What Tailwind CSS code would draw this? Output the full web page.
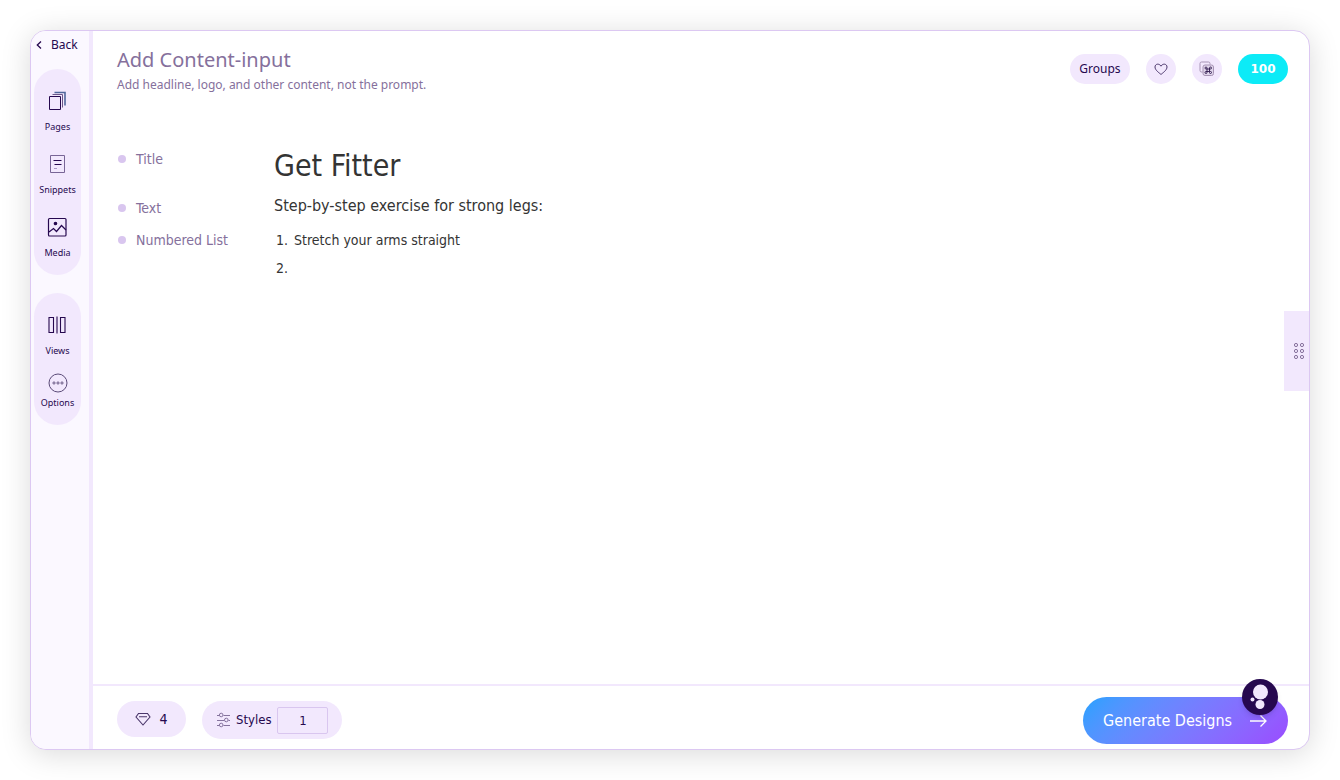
<!DOCTYPE html>
<html lang="en">
<head>
<meta charset="utf-8">
<meta name="viewport" content="width=device-width, initial-scale=1">
<title>Add Content-input</title>
<script src="https://cdn.jsdelivr.net/npm/@tailwindcss/browser@4"></script>
</head>
<body class="h-screen bg-white p-[30px] font-['DejaVu_Sans_Condensed','DejaVu_Sans',sans-serif] text-[#26084f]">
<div class="relative flex h-full overflow-hidden rounded-2xl border border-[#dcc8f2] bg-white shadow-[0_4px_30px_rgba(0,0,0,0.15)]">

  <aside class="flex w-[62px] shrink-0 flex-col border-r-4 border-[#f2e8fd] bg-[#fbf8ff]">
    <a href="#" class="flex h-[38px] items-center gap-2 pb-2.5 pl-1 font-['Noto_Sans',sans-serif] text-xs">
      <svg class="h-2.5 w-2" viewBox="0 0 8 10" fill="none" stroke="currentColor" stroke-width="1.3"><path d="M6 1.5 2.3 5 6 8.5"/></svg>Back</a>
    <nav class="ml-[3px] flex w-[47px] flex-col rounded-3xl bg-[#f2e8fd] pt-5 pb-4 font-['Noto_Sans',sans-serif] text-[9px] leading-3">
      <button class="flex h-[63px] flex-col items-center gap-2">
        <svg class="h-6 w-6 shrink-0" viewBox="0 0 24 24" fill="none" stroke="currentColor"><path d="M3.500 7.500h11v13h-11z"/><path d="M6.500 5.500h10v13" stroke="#6b5688"/><path d="M8.500 3.500h10.500v13" stroke="#50669b" stroke-width="1.600"/></svg>Pages</button>
      <button class="flex h-[63px] flex-col items-center gap-2">
        <svg class="h-6 w-6 shrink-0" viewBox="0 0 24 24" fill="none" stroke="currentColor"><path d="M4.500 3.500h14v17h-14z" stroke="#786596"/><path d="M7.500 8.500h8M8.500 12.500h7"/><path d="M8 16.500h3" stroke="#a994c5"/></svg>Snippets</button>
      <button class="flex flex-col items-center gap-2">
        <svg class="h-6 w-6 shrink-0" viewBox="0 0 24 24" fill="none" stroke="currentColor" stroke-width="1.200"><rect x="2.500" y="3.500" width="17.500" height="17.500" rx="1"/><path d="m3 17 4.500-3.500 3 3 5-6L20 15"/><circle cx="9.500" cy="8.500" r="1.200" fill="currentColor"/></svg>Media</button>
    </nav>
    <nav class="mt-[18px] ml-[3px] flex w-[47px] flex-col gap-4 rounded-3xl bg-[#f2e8fd] pt-5 pb-4 font-['Noto_Sans',sans-serif] text-[9px] leading-3">
      <button class="flex flex-col items-center gap-2">
        <svg class="h-6 w-6 shrink-0" viewBox="0 0 24 24" fill="none" stroke="currentColor" stroke-width="1.100"><path d="M3 4.500h4.500v15H3zM14.500 4.500H19v15h-4.500zM11 3.500v17"/></svg>Views</button>
      <button class="flex flex-col items-center gap-1">
        <svg class="h-5 w-5 shrink-0" viewBox="0 0 20 20" fill="none" stroke="#5b4b78"><circle cx="10" cy="10" r="9"/><g stroke-width=".9"><circle cx="6" cy="10" r="1.100"/><circle cx="10" cy="10" r="1.100"/><circle cx="14" cy="10" r="1.100"/></g></svg>Options</button>
    </nav>
  </aside>

  <div class="flex min-w-0 grow flex-col">
    <header class="flex justify-between pt-4 pr-[21px] pl-6">
      <div class="font-['Noto_Sans',sans-serif] text-[#85709c]">
        <h1 class="text-xl leading-[26px]">Add Content-input</h1>
        <p class="text-xs leading-6">Add headline, logo, and other content, not the prompt.</p>
      </div>
      <div class="mt-[7px] flex h-[30px] gap-4">
        <button class="w-[60px] rounded-full bg-[#f2e8fd] font-['Noto_Sans',sans-serif] text-xs">Groups</button>
        <button aria-label="Favorites" class="grid w-[30px] place-items-center rounded-full bg-[#f2e8fd]">
          <svg class="h-3.5 w-3.5" viewBox="0 0 14 14" fill="none" stroke="#4b376b"><path d="M7 12.500C5.200 10.800 1 8.200 1 5c0-3.200 4.200-4 6-.8C8.800 1 13 1.800 13 5c0 3.200-4.200 5.800-6 7.500Z"/></svg></button>
        <button aria-label="Shortcuts" class="grid w-[30px] place-items-center rounded-full bg-[#f2e8fd]">
          <svg class="h-4 w-4" viewBox="0 0 16 16" fill="none" stroke="#a794b5"><path d="M3.500 11H2.500A1.500 1.500 0 0 1 1 9.500v-7A1.500 1.500 0 0 1 2.500 1h7A1.500 1.500 0 0 1 11 2.500V3.500"/><rect x="4" y="4" width="10.500" height="10.500" rx="2" fill="#e0d5eb"/><path d="M8 8h2.500v2.500H8zM8 8H7a1 1 0 1 1 1-1zM10.500 8V7a1 1 0 1 1 1 1zM8 10.500v1a1 1 0 1 1-1-1zM10.500 10.500h1a1 1 0 1 1-1 1z" stroke="#2e174d" stroke-width=".9"/></svg></button>
        <button class="w-[50px] rounded-full bg-[#0cebf7] font-['DejaVu_Sans',sans-serif] text-xs font-bold text-white">100</button>
      </div>
    </header>

    <main class="grid grow grid-cols-[157px_1fr] content-start pt-[51px] pl-6 text-[#343434]">
      <div class="flex h-12 items-start gap-2.5 pt-px text-sm text-[#85709c]"><span class="mt-1.5 ml-px size-2 rounded-full bg-[#d9c6ef]"></span>Title</div>
      <h2 class="text-[30px] leading-9">Get Fitter</h2>
      <div class="flex h-8 items-start gap-2.5 pt-0.5 text-sm text-[#85709c]"><span class="mt-1.5 ml-px size-2 rounded-full bg-[#d9c6ef]"></span>Text</div>
      <p class="text-base leading-5">Step-by-step exercise for strong legs:</p>
      <div class="flex items-start gap-2.5 pt-0.5 text-sm text-[#85709c]"><span class="mt-1.5 ml-px size-2 rounded-full bg-[#d9c6ef]"></span>Numbered List</div>
      <ol class="-mt-0.5 text-sm leading-7">
        <li class="flex gap-1.5 pl-0.5"><span>1.</span>Stretch your arms straight</li>
        <li class="pl-0.5">2.</li>
      </ol>
    </main>

    <footer class="flex h-[65px] items-start justify-between border-t-2 border-[#f2e8fd] pr-[21px] pl-6">
      <div class="flex items-start gap-4 pt-[15px]">
        <button class="flex h-9 w-[69px] items-center justify-center gap-2 rounded-full bg-[#f2e8fd] text-sm">
          <svg class="h-4 w-4" viewBox="0 0 16 16" fill="none" stroke="#4b376b" stroke-width="1.100"><path d="M3.500 2.500h9L15 6l-7 8L1 6z"/><path d="M4 5.800h8"/></svg>4</button>
        <div class="flex h-[38px] items-center rounded-full bg-[#f2e8fd] px-3.5 text-[13px]">
          <svg class="mr-1 h-4 w-4" viewBox="0 0 16 16" fill="none" stroke="#85739e"><path d="M1 3.500h2M7.500 3.500H14M1 8.500h7M12.500 8.500h1.500M1 13.500h2M7.500 13.500H14"/><circle cx="5.200" cy="3" r="1.800"/><circle cx="10.300" cy="8" r="1.800"/><circle cx="5.200" cy="13" r="1.800"/></svg>
          <label for="styles">Styles</label>
          <input id="styles" value="1" class="ml-1.5 h-[27px] w-[51px] rounded-xs border border-[#d9c6ef] bg-transparent text-center">
        </div>
      </div>
      <button class="mt-[11px] flex h-[47px] w-[205px] items-center gap-4 rounded-full bg-linear-135 from-[#1fa2ff] to-[#9a4bff] pl-5 text-base text-white">Generate Designs
        <svg class="h-4 w-5 shrink-0" viewBox="0 0 20 16" fill="none" stroke="currentColor" stroke-width="1.300"><path d="M2 8h16M12.500 2.500 18 8l-5.500 5.500"/></svg></button>
    </footer>
  </div>

  <button aria-label="Drag panel" class="absolute top-[280px] right-0 grid h-20 w-[25px] place-items-center bg-[#f2e8fd] pl-1">
    <svg class="h-[18px] w-3" viewBox="0 0 12 18" fill="none" stroke="#86719c"><circle cx="3" cy="3" r="1.600"/><circle cx="9" cy="3" r="1.600"/><circle cx="3" cy="9" r="1.600"/><circle cx="9" cy="9" r="1.600"/><circle cx="3" cy="15" r="1.600"/><circle cx="9" cy="15" r="1.600"/></svg></button>
  <button aria-label="Assistant" class="absolute right-[31px] bottom-[34px] size-9 rounded-full bg-[#26084f] shadow-md">
    <svg class="size-9" viewBox="0 0 36 36" fill="#f2e8fd"><circle cx="18.500" cy="13" r="7.500"/><circle cx="18" cy="25.500" r="4.500"/><circle cx="10.500" cy="20.500" r="2"/></svg></button>
</div>
</body>
</html>
